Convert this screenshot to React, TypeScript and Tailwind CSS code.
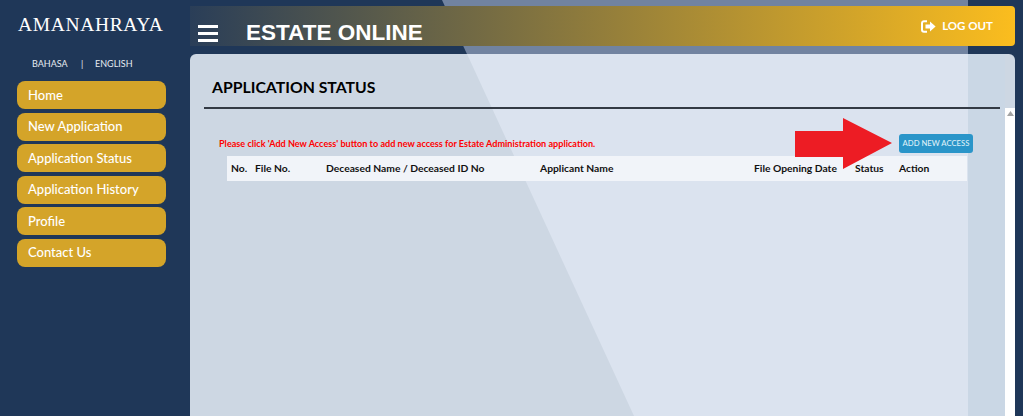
import React from "react";

const menu = ["Home", "New Application", "Application Status", "Application History", "Profile", "Contact Us"];

export default function App() {
  return (
    <div className="relative flex h-screen w-full overflow-hidden bg-[#1f3758] font-['Lato','Open_Sans',sans-serif]">
      {/* faint light shape behind the page */}
      <div className="absolute inset-y-0 left-[442px] right-[55px] bg-[#7183a0] [clip-path:polygon(0_0,100%_0,100%_100%,192px_100%)]" />

      <aside className="relative w-[190px] shrink-0 pl-[17px] pr-[24px]">
        <div className="ml-[1px] mt-[14px] w-[148px] whitespace-nowrap font-['Liberation_Serif',serif] text-[19.5px] leading-[22px] tracking-[0.65px] text-white">
          AMANAHRAYA
        </div>
        <div className="mt-[22px] flex h-[12px] items-center pl-[15px] text-[9px] leading-[12px] text-[#e6ebf2]">
          <span className="w-[49px]">BAHASA</span>
          <span className="w-[14px]">|</span>
          <span>ENGLISH</span>
        </div>
        <nav className="mt-[11px] flex flex-col gap-[3.5px]">
          {menu.map((m) => (
            <div
              key={m}
              className="flex h-[28px] items-center rounded-[8px] bg-[#d4a429] pl-[11px] pt-[1px] text-[13px] font-medium text-white"
            >
              {m}
            </div>
          ))}
        </nav>
      </aside>

      <main className="relative flex min-w-0 flex-1 flex-col pr-[8px] pt-[6px]">
        <header className="flex h-[40px] shrink-0 items-center rounded-r-[4px] bg-[linear-gradient(90deg,#2a3e58,#fbbd1e)] pl-[8px] pr-[22px]">
          <div className="mt-[15px] flex w-[20px] flex-col gap-[3.5px]">
            <span className="h-[3.5px] bg-white" />
            <span className="h-[3.5px] bg-white" />
            <span className="h-[3.5px] bg-white" />
          </div>
          <h1 className="ml-[28px] mt-[14px] font-['Liberation_Sans',sans-serif] text-[22.5px] font-bold leading-[24px] text-white">
            ESTATE ONLINE
          </h1>
          <div className="ml-auto flex items-center gap-[6px] text-[11.5px] font-bold text-white">
            <svg width="15" height="13" viewBox="0 0 15 13" fill="none">
              <path d="M6 1.2H3A2 2 0 0 0 1 3.2v6.6a2 2 0 0 0 2 2h3" stroke="white" strokeWidth="2" />
              <path d="M4.5 4.4H9V1.4L14.6 6.5 9 11.6V8.6H4.5Z" fill="white" />
            </svg>
            <span>LOG OUT</span>
          </div>
        </header>

        <section className="relative mt-[8px] min-h-0 flex-1 overflow-hidden rounded-t-[6px] bg-[#cdd7e3]">
          <div className="absolute inset-y-0 left-[277px] w-[501px] bg-[#dbe3ef] [clip-path:polygon(0_0,100%_0,100%_100%,167px_100%)]" />
          <div className="absolute inset-y-0 left-[778px] right-[10px] bg-[#cad7e5]" />

          <div className="relative h-full">
            <h2 className="ml-[22px] pt-[23px] text-[15.8px] font-bold leading-[20px] text-black">
              APPLICATION STATUS
            </h2>
            <div className="ml-[14px] mr-[15px] mt-[10px] h-[1.5px] bg-[#333a44]" />

            <div className="absolute bottom-0 right-0 top-[54px] flex w-[10px] justify-center bg-white pt-[3px]">
              <svg width="7" height="5" viewBox="0 0 7 5"><path d="M3.5 0 7 5H0Z" fill="#a3a3a3" /></svg>
            </div>

            <div className="ml-[29px] mr-[42px] mt-[25px] flex h-[20px] items-center justify-between">
              <p className="text-[9.1px] font-bold text-[#ff0000]">
                Please click 'Add New Access' button to add new access for Estate Administration application.
              </p>
              <button className="flex h-[19px] w-[74px] items-center justify-center rounded-[3px] bg-[#2a95c9] text-[7.7px] font-medium text-[#dff0f8]">
                ADD NEW ACCESS
              </button>
            </div>

            <div className="ml-[37px] mr-[48px] mt-[2px] grid h-[25px] grid-cols-[24px_71px_214px_214px_101px_44px_1fr] items-center bg-[#f1f4f9] pl-[4px] pt-[2px] text-[10.3px] font-bold text-[#111]">
              <span>No.</span>
              <span>File No.</span>
              <span>Deceased Name / Deceased ID No</span>
              <span>Applicant Name</span>
              <span>File Opening Date</span>
              <span>Status</span>
              <span>Action</span>
            </div>
          </div>
        </section>
      </main>

      {/* red annotation arrow lying over the page */}
      <svg className="pointer-events-none absolute left-[795px] top-[118px]" width="97" height="51" viewBox="0 0 97 51">
        <path d="M0 13H48V0L97 25 48 51V39H0Z" fill="#ed1c24" />
      </svg>
    </div>
  );
}
